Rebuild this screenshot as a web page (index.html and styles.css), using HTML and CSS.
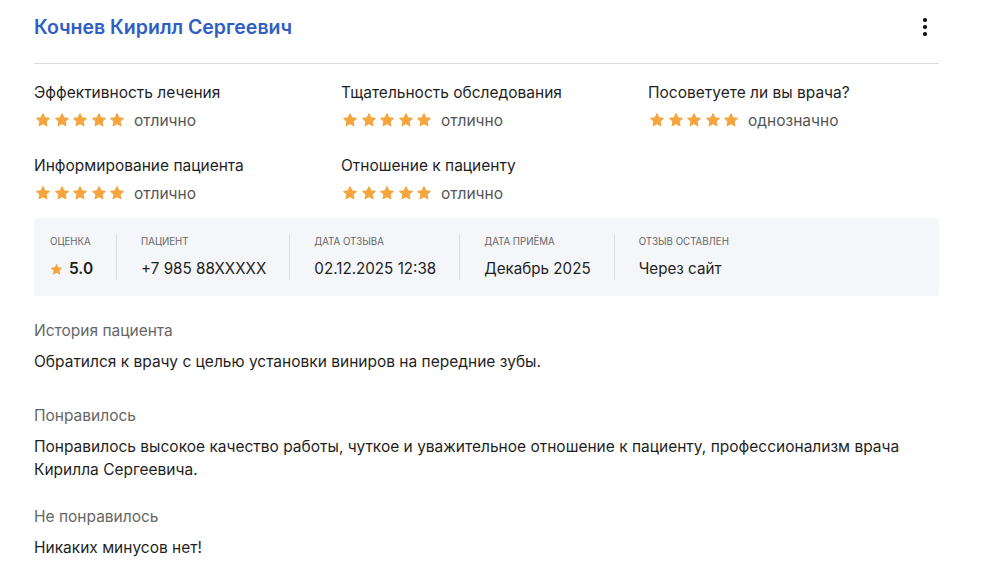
FILE: index.html
```html
<!DOCTYPE html>
<html lang="ru">
<head>
<meta charset="utf-8">
<link rel="stylesheet" href="styles.css">
</head>
<body>
<svg class="defs" width="0" height="0" aria-hidden="true">
  <symbol id="star" viewBox="0 0 24 24">
    <path d="M12 2.6l2.85 6.05 6.6.85-4.85 4.55 1.25 6.55L12 17.35l-5.85 3.25 1.25-6.55L2.55 9.5l6.6-.85z" fill="currentColor" stroke="currentColor" stroke-width="1.6" stroke-linejoin="round"/>
  </symbol>
</svg>
<div class="review">
  <div class="head">
    <h1 class="name">Кочнев Кирилл Сергеевич</h1>
    <button class="more" aria-label="Ещё"><span></span><span></span><span></span></button>
  </div>
  <div class="ratings">
    <div class="rating">
      <div class="r-label">Эффективность лечения</div>
      <div class="r-stars"><span class="stars"><svg class="star"><use href="#star"/></svg><svg class="star"><use href="#star"/></svg><svg class="star"><use href="#star"/></svg><svg class="star"><use href="#star"/></svg><svg class="star"><use href="#star"/></svg></span><span class="r-val">отлично</span></div>
    </div>
    <div class="rating">
      <div class="r-label">Тщательность обследования</div>
      <div class="r-stars"><span class="stars"><svg class="star"><use href="#star"/></svg><svg class="star"><use href="#star"/></svg><svg class="star"><use href="#star"/></svg><svg class="star"><use href="#star"/></svg><svg class="star"><use href="#star"/></svg></span><span class="r-val">отлично</span></div>
    </div>
    <div class="rating">
      <div class="r-label">Посоветуете ли вы врача?</div>
      <div class="r-stars"><span class="stars"><svg class="star"><use href="#star"/></svg><svg class="star"><use href="#star"/></svg><svg class="star"><use href="#star"/></svg><svg class="star"><use href="#star"/></svg><svg class="star"><use href="#star"/></svg></span><span class="r-val">однозначно</span></div>
    </div>
    <div class="rating">
      <div class="r-label">Информирование пациента</div>
      <div class="r-stars"><span class="stars"><svg class="star"><use href="#star"/></svg><svg class="star"><use href="#star"/></svg><svg class="star"><use href="#star"/></svg><svg class="star"><use href="#star"/></svg><svg class="star"><use href="#star"/></svg></span><span class="r-val">отлично</span></div>
    </div>
    <div class="rating">
      <div class="r-label">Отношение к пациенту</div>
      <div class="r-stars"><span class="stars"><svg class="star"><use href="#star"/></svg><svg class="star"><use href="#star"/></svg><svg class="star"><use href="#star"/></svg><svg class="star"><use href="#star"/></svg><svg class="star"><use href="#star"/></svg></span><span class="r-val">отлично</span></div>
    </div>
  </div>
  <div class="info">
    <div class="cell">
      <div class="c-label">Оценка</div>
      <div class="c-val score"><svg class="star-sm"><use href="#star"/></svg>5.0</div>
    </div>
    <div class="cell">
      <div class="c-label">Пациент</div>
      <div class="c-val">+7 985 88XXXXX</div>
    </div>
    <div class="cell">
      <div class="c-label">Дата отзыва</div>
      <div class="c-val">02.12.2025 12:38</div>
    </div>
    <div class="cell">
      <div class="c-label">Дата приёма</div>
      <div class="c-val">Декабрь 2025</div>
    </div>
    <div class="cell">
      <div class="c-label">Отзыв оставлен</div>
      <div class="c-val">Через сайт</div>
    </div>
  </div>
  <div class="section section-story">
    <div class="s-title">История пациента</div>
    <p class="s-text">Обратился к врачу с целью установки виниров на передние зубы.</p>
  </div>
  <div class="section section-liked">
    <div class="s-title">Понравилось</div>
    <p class="s-text">Понравилось высокое качество работы, чуткое и уважительное отношение к пациенту, профессионализм врача Кирилла Сергеевича.</p>
  </div>
  <div class="section section-disliked">
    <div class="s-title">Не понравилось</div>
    <p class="s-text">Никаких минусов нет!</p>
  </div>
</div>
</body>
</html>
```
FILE: styles.css
```css
* { box-sizing: border-box; }
html, body { margin: 0; padding: 0; background: #fff; }
body {
  font-family: Inter, "Noto Sans", "Liberation Sans", sans-serif;
  color: #1f1f1f;
}
.defs { position: absolute; width: 0; height: 0; overflow: hidden; }
.review {
  width: 905px;
  margin-left: 34px;
  padding-top: 12px;
}
.head {
  display: flex;
  justify-content: space-between;
  align-items: center;
  height: 30px;
  padding-bottom: 21px;
  border-bottom: 1px solid #dcdcdc;
  box-sizing: content-box;
}
.name {
  margin: 0;
  font-size: 19.5px;
  font-weight: 600;
  color: #2f5ec4;
}
.more {
  border: 0;
  background: none;
  padding: 0;
  width: 16px;
  height: 20px;
  margin-right: 6px;
  display: flex;
  flex-direction: column;
  align-items: center;
  justify-content: center;
  gap: 3.5px;
}
.more span {
  width: 3.5px;
  height: 3.5px;
  border-radius: 50%;
  background: #111;
}
.ratings {
  display: grid;
  grid-template-columns: 307px 307px 1fr;
  row-gap: 26px;
  padding-top: 19px;
}
.r-label {
  font-size: 15.5px;
  line-height: 20px;
  color: #1f1f1f;
}
.r-stars {
  display: flex;
  align-items: center;
  margin-top: 7px;
  height: 20px;
}
.stars {
  display: flex;
  gap: 2.5px;
  color: #f4a53d;
  margin-left: 1px;
}
.star {
  width: 16px;
  height: 16px;
  display: block;
}
.r-val {
  margin-left: 9px;
  font-size: 15.5px;
  color: #555;
}
.info {
  display: flex;
  margin-top: 15px;
  background: #f4f6f9;
  border-radius: 2px;
  padding: 16px 0;
  height: 78px;
}
.cell {
  padding: 0 23px 0 24px;
  border-left: 1px solid #dadde2;
  display: flex;
  flex-direction: column;
}
.cell:first-child {
  border-left: 0;
  padding-left: 16px;
}
.c-label {
  font-size: 9.7px;
  text-transform: uppercase;
  color: #666;
  line-height: 14px;
  margin-top: 1px;
}
.c-val {
  font-size: 15.2px;
  line-height: 20px;
  margin-top: 10px;
  color: #1f1f1f;
}
.score {
  font-weight: 600;
  font-size: 15.5px;
  display: flex;
  align-items: center;
}
.star-sm {
  width: 13px;
  height: 13px;
  color: #f4a53d;
  margin-right: 6px;
  display: block;
}
.section { margin-top: 24px; }
.section-liked { margin-top: 32px; }
.section-disliked { margin-top: 25px; }
.s-title {
  font-size: 15.5px;
  line-height: 22px;
  color: #666;
}
.s-text {
  margin: 8px 0 0;
  font-size: 15.5px;
  line-height: 23px;
  color: #1f1f1f;
}
```
